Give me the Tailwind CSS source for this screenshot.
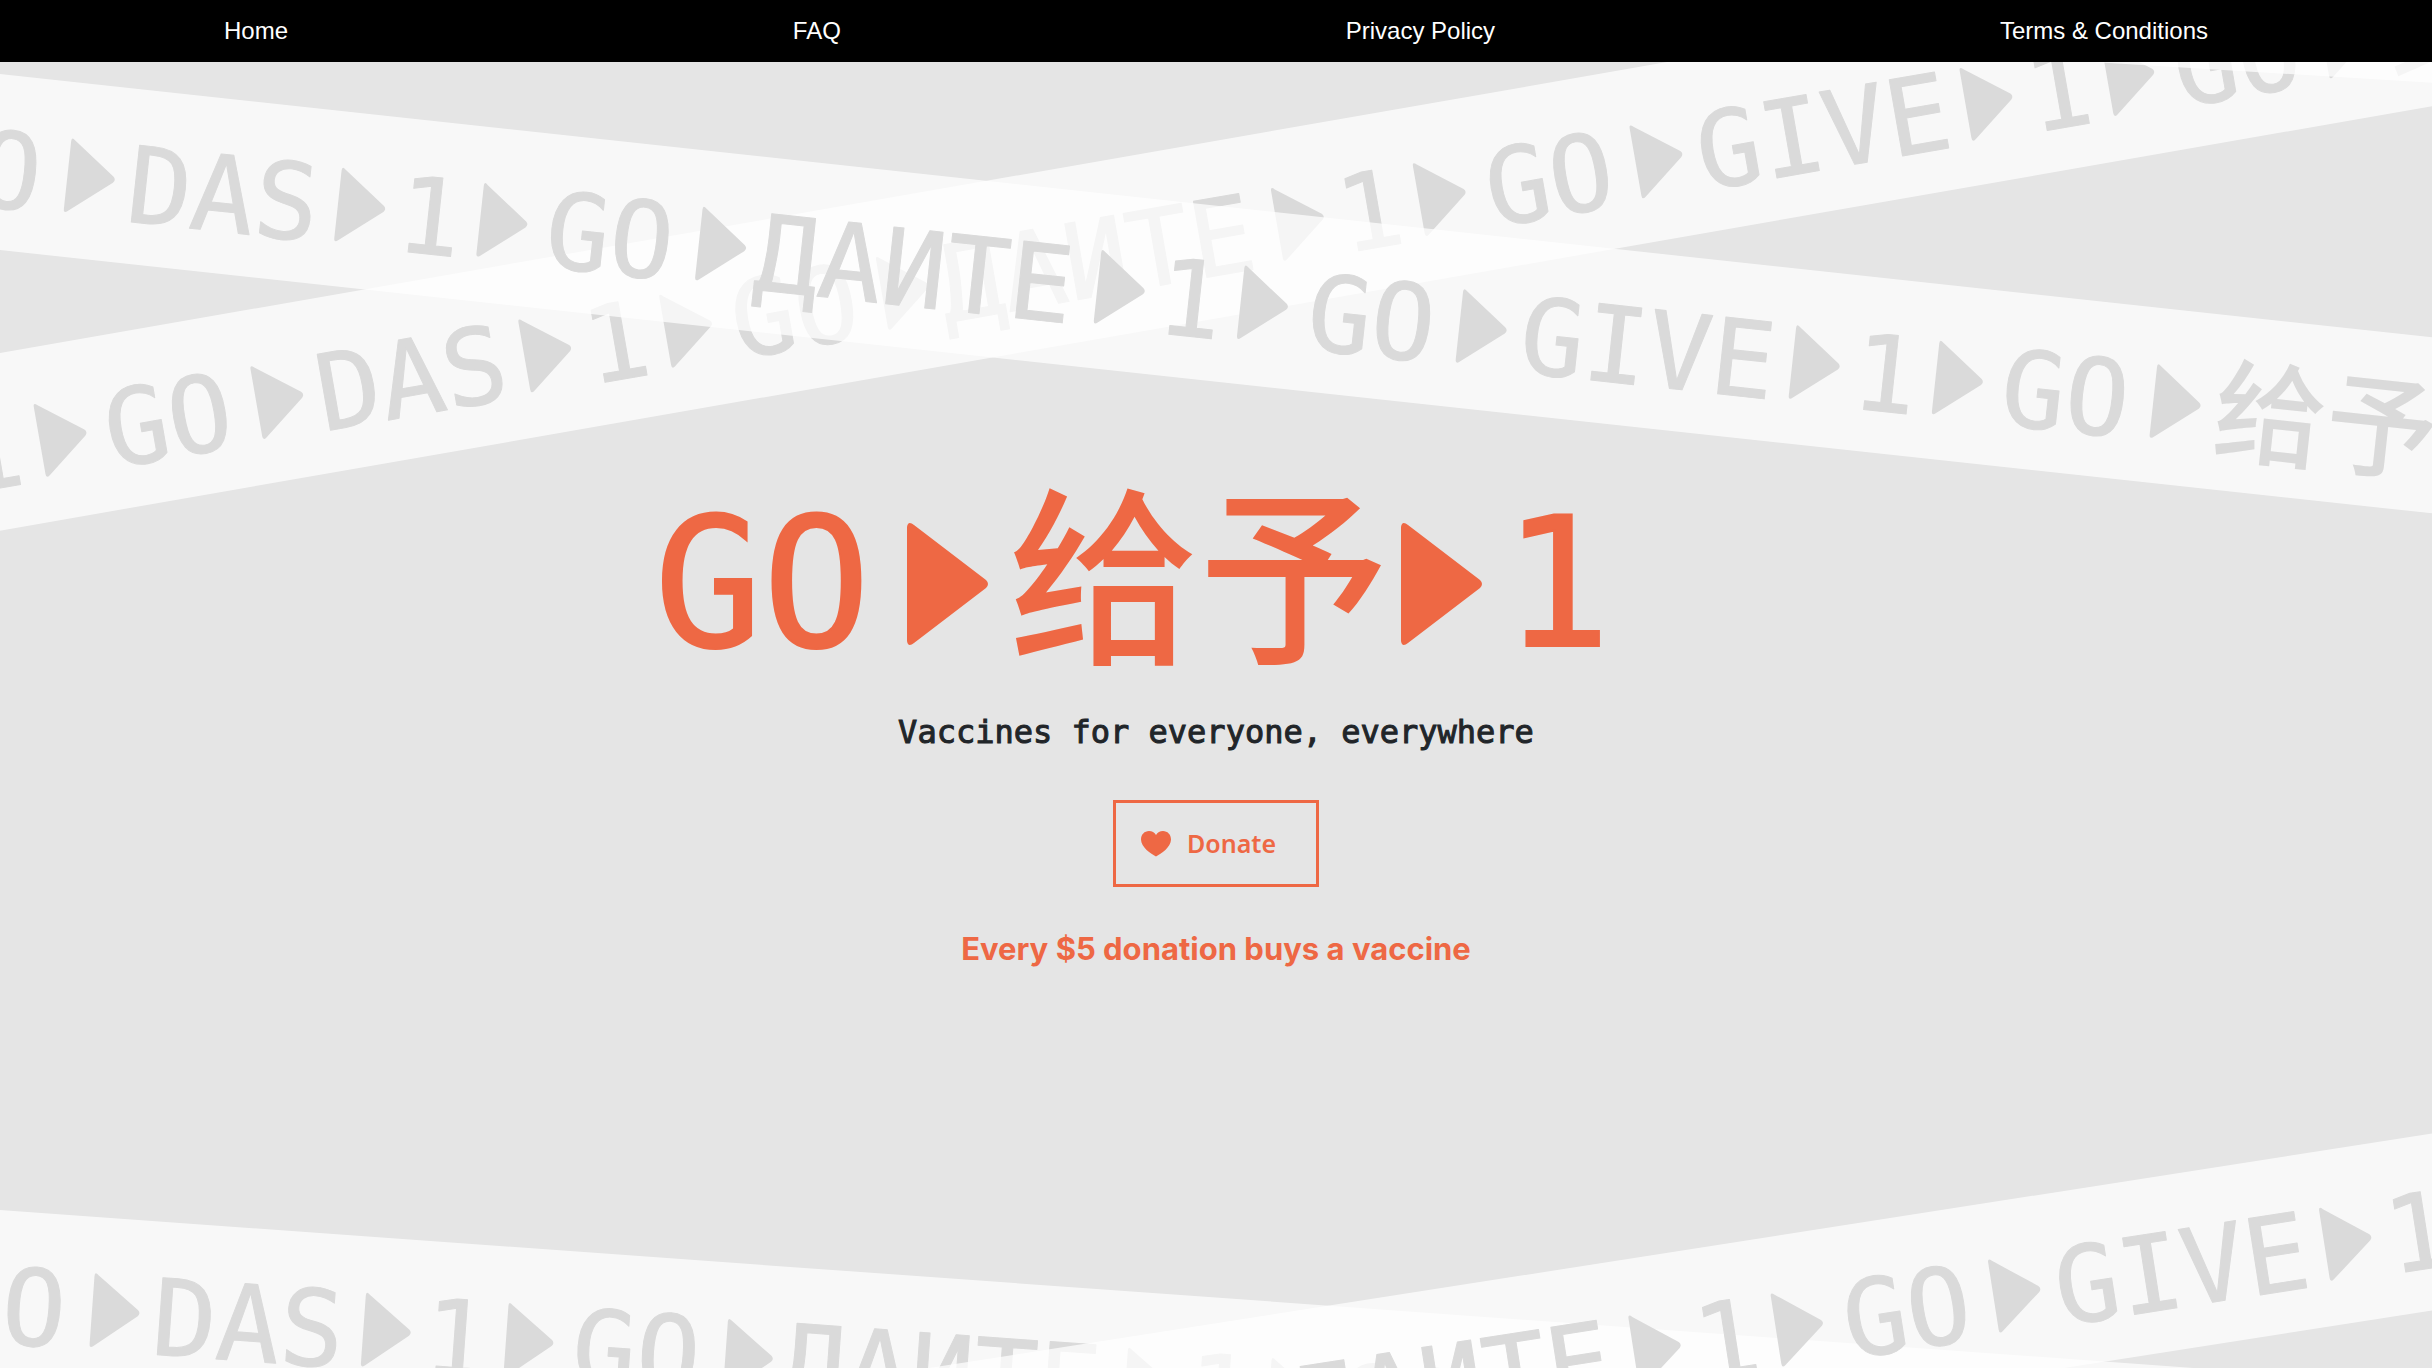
<!DOCTYPE html>
<html lang="en">
<head>
    <meta charset="UTF-8">
    <meta name="viewport" content="width=device-width, initial-scale=1.0">
    <title>Go Give One</title>
    <script src="https://cdn.jsdelivr.net/npm/@tailwindcss/browser@4"></script>
</head>
<body class="min-h-screen flex flex-col bg-[#e5e5e5] font-['Liberation_Sans',Arial,sans-serif]">
<nav class="relative z-10 flex h-[62px] items-center justify-between bg-black px-56 text-2xl text-white">
    <a href="#">Home</a>
    <a href="#">FAQ</a>
    <a href="#">Privacy Policy</a>
    <a href="#">Terms &amp; Conditions</a>
</nav>

<!-- crossed tapes behind the content -->
<svg class="absolute inset-0 h-full w-full" viewBox="0 0 2432 1368" preserveAspectRatio="xMidYMin slice" aria-hidden="true">
    <defs>
        <path id="arrow" d="M0 3Q0 -2 4 2L46 34Q49 37 46 40L4 73Q0 76 0 71Z"/>
        <g id="tape">
            <rect x="-800" width="4400" height="175" fill="#fff" fill-opacity=".73"/>
            <g class="text-[106px] font-medium font-['DejaVu_Sans_Mono','Noto_Sans_CJK_SC',monospace]" fill="#dadada" text-anchor="middle">
                <g stroke="#dadada" stroke-width="1" stroke-linejoin="round">
                    <text x="-193" y="133">1</text>
                    <text x="-12" y="133">GO</text>
                    <text x="235" y="133">DAS</text>
                    <text x="443" y="133">1</text>
                    <text x="624" y="133">GO</text>
                    <text x="930" y="133">ДАИТЕ</text>
                    <text x="1208" y="133">1</text>
                    <text x="1390" y="133">GO</text>
                    <text x="1668" y="133">GIVE</text>
                    <text x="1907" y="133">1</text>
                    <text x="2088" y="133">GO</text>
                </g>
                <text class="text-[112px]" x="2350" y="136">给予</text>
                <use href="#arrow" x="-142" y="56"/>
                <use href="#arrow" x="78" y="56"/>
                <use href="#arrow" x="350" y="56"/>
                <use href="#arrow" x="493" y="56"/>
                <use href="#arrow" x="713" y="56"/>
                <use href="#arrow" x="1114" y="56"/>
                <use href="#arrow" x="1258" y="56"/>
                <use href="#arrow" x="1478" y="56"/>
                <use href="#arrow" x="1813" y="56"/>
                <use href="#arrow" x="1957" y="56"/>
                <use href="#arrow" x="2176" y="56"/>
            </g>
        </g>
    </defs>
    <use href="#tape" transform="translate(0 353) rotate(-9.9) translate(166 0)"/>
    <use href="#tape" transform="translate(0 74) rotate(6.18)"/>
    <rect y="-175" width="2800" height="175" fill="#fff" fill-opacity=".73" transform="translate(0 -66) rotate(3.5)"/>
    <use href="#tape" transform="translate(0 1210) rotate(4.12) translate(21 0)"/>
    <use href="#tape" transform="translate(0 1513) rotate(-8.87) translate(525 0)"/>
</svg>

<main class="relative flex flex-col items-center pt-[412px]">
    <h1 class="flex h-[220px] w-[1124px] items-center text-[180px] leading-none font-medium text-[#ee6844] font-['DejaVu_Sans_Mono','Noto_Sans_CJK_SC',monospace]">
        <span class="[-webkit-text-stroke:2px]">GO</span>
        <svg class="ml-9 h-[124px] w-[82px]" viewBox="0 0 82 124" fill="currentColor"><path d="M0 5Q1 -2 7 3L79 58Q83 62 79 66L7 121Q1 126 0 119Z"/></svg>
        <span class="ml-5 text-[190px]">给予</span>
        <svg class="ml-3 h-[124px] w-[82px]" viewBox="0 0 82 124" fill="currentColor"><path d="M0 5Q1 -2 7 3L79 58Q83 62 79 66L7 121Q1 126 0 119Z"/></svg>
        <span class="ml-5 [-webkit-text-stroke:2px]">1</span>
    </h1>
    <p class="mt-[14px] text-[32px] leading-12 text-[#212529] [-webkit-text-stroke:1px] font-['DejaVu_Sans_Mono',monospace]">Vaccines for everyone, everywhere</p>
    <button class="mt-11 flex h-[87px] w-[206px] items-center gap-4 border-3 border-[#ee6844] pl-[25px] text-[25px] font-semibold text-[#ee6844] font-['Noto_Sans',sans-serif]">
        <svg class="h-[26px] w-[30px]" viewBox="0 0 30 26" fill="currentColor"><path d="M15 25.500C10 23 0 16 0 8.500C0 3.500 3.500 0 8 0C11 0 13.500 1.500 15 4C16.500 1.500 19 0 22 0C26.500 0 30 3.500 30 8.500C30 16 20 23 15 25.500Z"/></svg>
        Donate
    </button>
    <p class="mt-[38px] text-[31px] leading-12 font-bold text-[#ee6844] font-[Inter,sans-serif]">Every $5 donation buys a vaccine</p>
</main>
</body>
</html>
